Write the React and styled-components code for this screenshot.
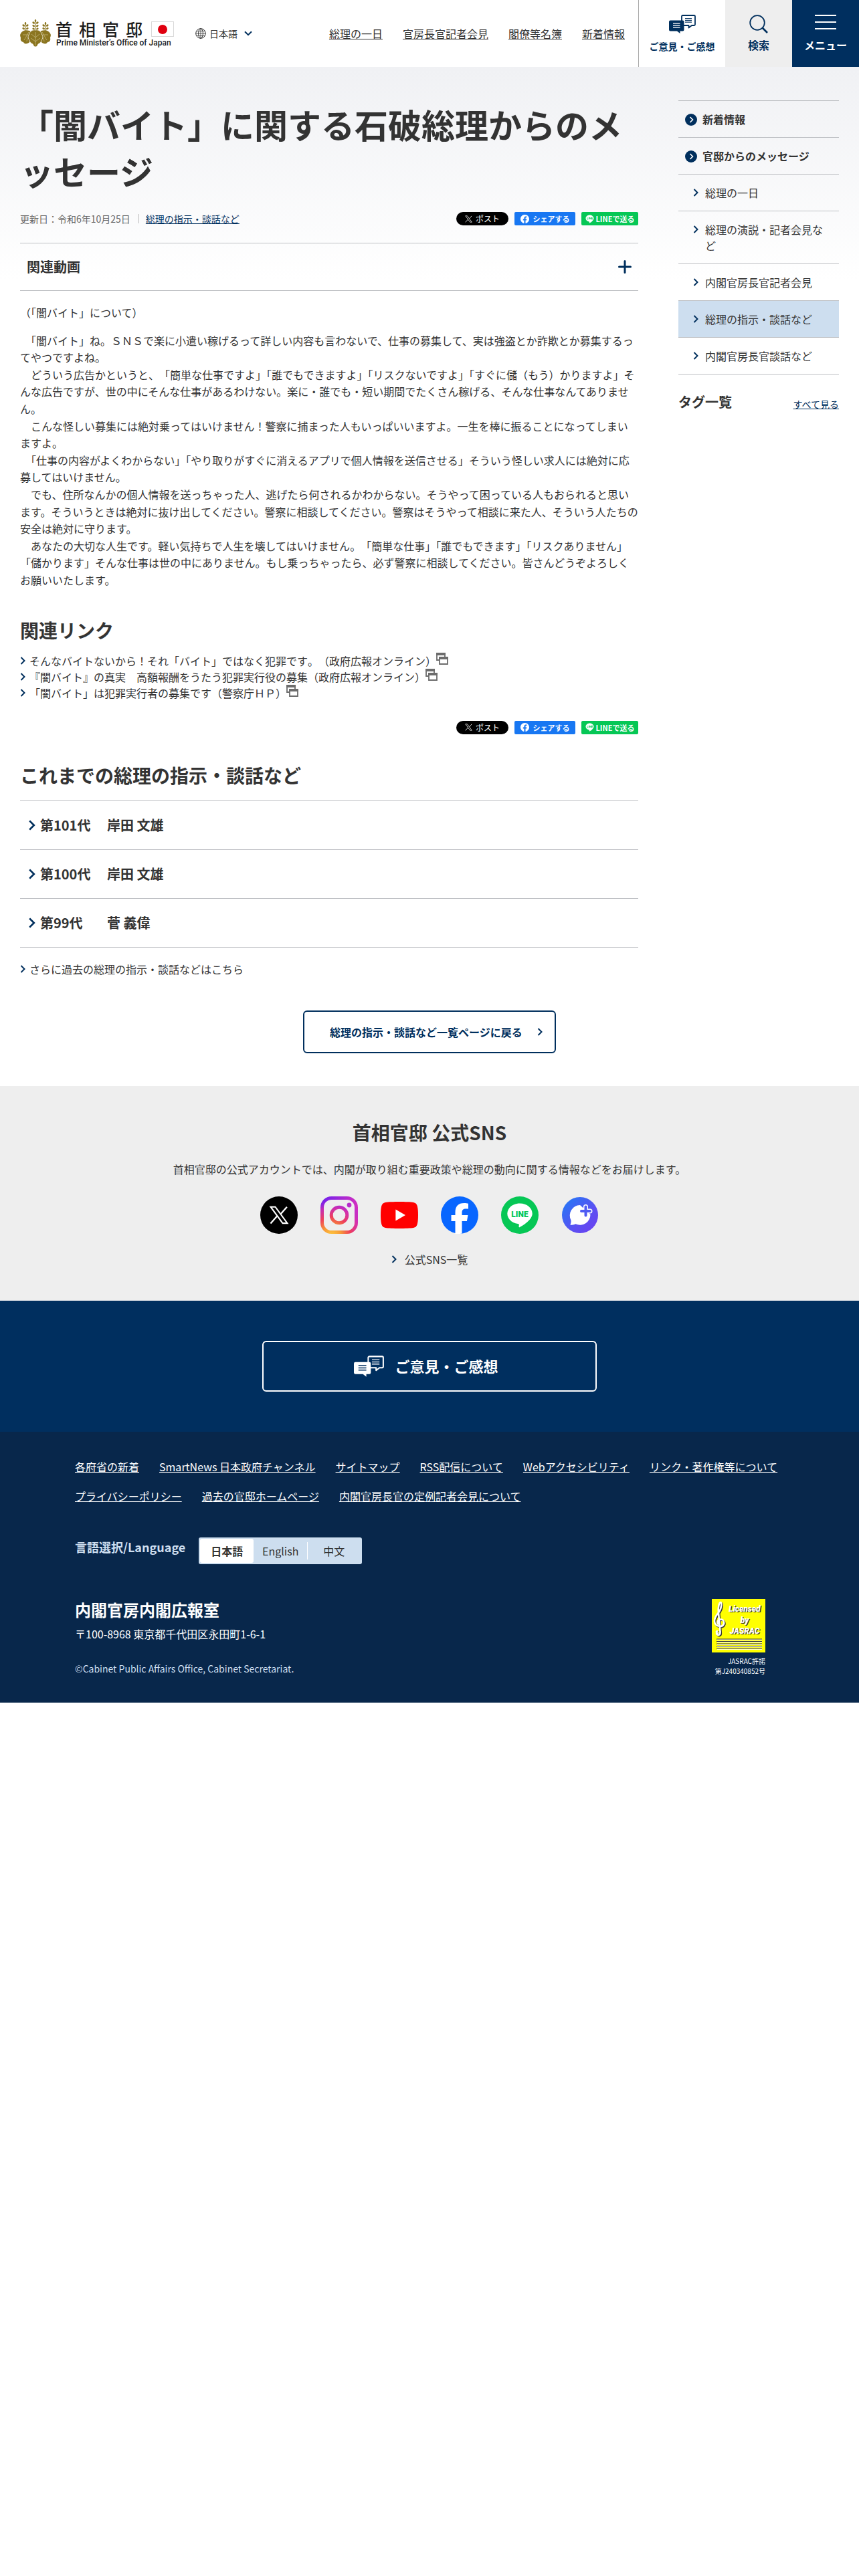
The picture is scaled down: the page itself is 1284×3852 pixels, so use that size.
import React, { useState } from "react";
import styled, { createGlobalStyle, css } from "styled-components";

const navy = "#002f5d";
const ink = "#333333";
const line = "#bcbec2";
const pale = "#cddeef";

const GlobalStyle = createGlobalStyle`
  *, *::before, *::after { box-sizing: border-box; }
  body {
    margin: 0;
    background: #ffffff;
    color: ${ink};
    font-family: "Noto Sans CJK JP", "Noto Sans", sans-serif;
    font-size: 16px;
    line-height: 1.5;
  }
  h1, h2, h3, p, ul { margin: 0; padding: 0; }
  ul { list-style: none; }
  a { color: inherit; }
  button { font: inherit; color: inherit; cursor: pointer; }
  svg { display: block; flex: none; }
`;

/* ---------- icons ---------- */

const Chevron = ({ w = 8, h = 12, color = navy, sw = 2 }) => (
  <svg width={w} height={h} viewBox="0 0 8 12" fill="none" aria-hidden="true">
    <path d="M1.5 1l5 5-5 5" stroke={color} strokeWidth={sw} />
  </svg>
);

const ChevronDown = () => (
  <svg width="12" height="8" viewBox="0 0 12 8" fill="none" aria-hidden="true">
    <path d="M1 1.2l5 5 5-5" stroke={navy} strokeWidth="2" />
  </svg>
);

const CircleArrow = () => (
  <svg width="18" height="18" viewBox="0 0 18 18" fill="none" aria-hidden="true">
    <circle cx="9" cy="9" r="9" fill={navy} />
    <path d="M7.5 5l4 4-4 4" stroke="#fff" strokeWidth="1.6" />
  </svg>
);

const Globe = () => (
  <svg width="16" height="16" viewBox="0 0 16 16" fill="none" stroke={ink} aria-hidden="true">
    <circle cx="8" cy="8" r="7.3" />
    <ellipse cx="8" cy="8" rx="3.4" ry="7.3" />
    <path d="M8 .7v14.6M.7 8h14.6M1.8 4.4h12.4M1.8 11.6h12.4" strokeWidth="0.8" />
  </svg>
);

const TalkIcon = ({ w = 40, h = 28, color = navy, ground = "#fff" }) => (
  <svg width={w} height={h} viewBox="0 0 40 28" fill="none" aria-hidden="true">
    <path
      d="M20.5 1h17A1.5 1.5 0 0 1 39 2.5v12a1.5 1.5 0 0 1-1.500 1.500H34l-4.500 3.500V16H19V2.500A1.500 1.500 0 0 1 20.500 1z"
      stroke={color}
      strokeWidth="1.8"
      strokeLinejoin="round"
    />
    <path d="M24 5.500h10M24 8.300h10M24 11.100h10" stroke={color} strokeWidth="1.200" />
    <path d="M2 8.500h18.500a2 2 0 0 1 2 2v12a2 2 0 0 1-2 2H16.500V28L12 24.500H2a2 2 0 0 1-2-2v-12a2 2 0 0 1 2-2z" fill={color} />
    <path d="M6 13.200h10.500M6 16.200h10.500M6 19.200h10.500" stroke={ground} strokeWidth="1.300" />
  </svg>
);

const SearchIcon = () => (
  <svg width="28" height="28" viewBox="0 0 28 28" fill="none" stroke={navy} aria-hidden="true">
    <circle cx="12" cy="12" r="10.800" strokeWidth="1.800" />
    <path d="M19.500 19.500l7.500 7.500" strokeWidth="2.600" />
  </svg>
);

const MenuIcon = () => (
  <svg width="32" height="22" viewBox="0 0 32 22" stroke="#fff" strokeWidth="2" aria-hidden="true">
    <path d="M0 1h32M0 11h32M0 21h32" />
  </svg>
);

const PlusIcon = () => (
  <svg width="20" height="20" viewBox="0 0 20 20" stroke={navy} strokeWidth="3" strokeLinecap="round" aria-hidden="true">
    <path d="M10 1.500v17M1.500 10h17" />
  </svg>
);

const WindowIcon = () => (
  <svg width="18" height="18" viewBox="0 0 18 18" fill="none" aria-hidden="true">
    <path d="M1 1h12v10H1z" stroke="#6c6c6c" strokeWidth="1.800" />
    <path d="M0 0h14v4H0z" fill="#6c6c6c" />
    <path d="M5 8h12v9H5z" fill="#fff" stroke="#6c6c6c" strokeWidth="1.800" />
    <path d="M4 6h14v4H4z" fill="#6c6c6c" />
  </svg>
);

const fbPath =
  "M24 12.073c0-6.627-5.373-12-12-12s-12 5.373-12 12c0 5.990 4.388 10.954 10.125 11.854v-8.385H7.078v-3.470h3.047V9.430c0-3.007 1.792-4.669 4.533-4.669 1.312 0 2.686.235 2.686.235v2.953H15.830c-1.491 0-1.956.925-1.956 1.874v2.250h3.328l-.532 3.470h-2.796v8.385C19.612 23.027 24 18.062 24 12.073z";

const xStroke = (
  <>
    <path d="M14.500 10.500L22 1.800M9.700 13.400L1.600 22.500" strokeWidth="1.900" />
    <path d="M1.700 1.800h5.800l15 20.400h-5.800z" strokeWidth="1.700" />
  </>
);

const XMini = () => (
  <svg width="11" height="11" viewBox="0 0 24 24" fill="none" stroke="#fff" aria-hidden="true">{xStroke}</svg>
);

const FbMini = () => (
  <svg width="13" height="13" viewBox="0 0 24 24" aria-hidden="true"><path d={fbPath} fill="#fff" /></svg>
);

const LineMini = () => (
  <svg width="13" height="13" viewBox="0 0 26 26" aria-hidden="true">
    <path d="M13 1C6.400 1 1 5.400 1 11c0 5 4.300 9 10 9.800 1.200.3.900 1.500.6 3.700 0 .5.400.8 1 .500C17 23 25 17 25 11 25 5.400 19.600 1 13 1z" fill="#fff" />
    <path d="M5.500 8v6h3M10.500 8v6M13 14V8l3.500 6V8M22 8h-3v6h3M19 11h3" stroke="#06c755" strokeWidth="1.400" fill="none" />
  </svg>
);

const SnsX = () => (
  <svg width="56" height="56" viewBox="0 0 56 56" fill="none" aria-hidden="true">
    <circle cx="28" cy="28" r="28" fill="#000" />
    <g transform="translate(13.500 13.500) scale(1.200)" stroke="#fff">{xStroke}</g>
  </svg>
);

const SnsInstagram = () => (
  <svg width="56" height="56" viewBox="0 0 56 56" fill="none" aria-hidden="true">
    <defs>
      <linearGradient id="igBase" x1="0" y1="0" x2="1" y2="0">
        <stop offset="0" stopColor="#6a1ff0" />
        <stop offset="1" stopColor="#d22fc0" />
      </linearGradient>
      <radialGradient id="igWarm" cx="0.300" cy="1.050" r="1">
        <stop offset="0" stopColor="#fec93f" />
        <stop offset="0.250" stopColor="#f79a37" />
        <stop offset="0.500" stopColor="#ee3f5a" />
        <stop offset="0.750" stopColor="#d930a8" stopOpacity="0.800" />
        <stop offset="1" stopColor="#a02be0" stopOpacity="0" />
      </radialGradient>
      <mask id="igMask">
        <rect x="2.500" y="2.500" width="51" height="51" rx="14" stroke="#fff" strokeWidth="5" />
        <circle cx="28" cy="28" r="11.800" stroke="#fff" strokeWidth="5" />
        <circle cx="43" cy="13" r="3.400" fill="#fff" />
      </mask>
    </defs>
    <g mask="url(#igMask)">
      <rect width="56" height="56" fill="url(#igBase)" />
      <rect width="56" height="56" fill="url(#igWarm)" />
    </g>
  </svg>
);

const SnsYoutube = () => (
  <svg width="56" height="56" viewBox="0 0 56 56" aria-hidden="true">
    <path d="M28 8c8 0 17 .3 21 1 3 .6 5 2.500 5.800 5.500C55.700 18 56 23 56 28s-.3 10-1.200 13.500C54 44.500 52 46.400 49 47c-4 .7-13 1-21 1s-17-.3-21-1c-3-.6-5-2.500-5.800-5.500C.3 38 0 33 0 28s.3-10 1.200-13.500C2 11.500 4 9.600 7 9c4-.7 13-1 21-1z" fill="#f00" />
    <path d="M22.400 19.500v17L37 28z" fill="#fff" />
  </svg>
);

const SnsFacebook = () => (
  <svg width="56" height="56" viewBox="0 0 56 56" aria-hidden="true">
    <circle cx="28" cy="28" r="28" fill="#0866ff" />
    <path d="M21.500 56V37h-6v-9h6v-4c0-9.500 4.500-14 13.500-14 1.800 0 4.800.300 6 .7v8c-.7-.1-1.900-.1-3.300-.1-4.500 0-6.200 1.700-6.200 6.100V28h9l-1.600 9h-7.400v18.600a28 28 0 0 1-10 .1z" fill="#fff" />
  </svg>
);

const SnsLine = () => (
  <svg width="56" height="56" viewBox="0 0 56 56" aria-hidden="true">
    <circle cx="28" cy="28" r="28" fill="#06c755" />
    <path d="M28 10.500c-10.500 0-18.700 6.800-18.700 15.300 0 7.600 6.700 13.900 15.800 15.100 2.100.5 1.900 1.300 1.400 4.100-.1.800.4 1.500 1.600.9C34 43 46.700 34.500 46.700 25.800c0-8.500-8.200-15.300-18.700-15.300z" fill="#fff" />
    <text x="28" y="30.500" textAnchor="middle" fontFamily="Roboto, sans-serif" fontWeight="900" fontSize="12" fill="#06c755">LINE</text>
  </svg>
);

const SnsPlus = () => (
  <svg width="56" height="56" viewBox="0 0 56 56" aria-hidden="true">
    <defs>
      <linearGradient id="plusGround" x1="0" y1="0" x2="1" y2="1">
        <stop offset="0" stopColor="#1d7df6" />
        <stop offset="0.600" stopColor="#5b50f2" />
        <stop offset="1" stopColor="#6f3ff0" />
      </linearGradient>
    </defs>
    <circle cx="28" cy="28" r="27" fill="url(#plusGround)" />
    <path d="M28 13a15.500 15.500 0 0 0-13.600 22.500c.6 2.500-.2 5-1 7 3 .7 6-.2 8-1.200A15.500 15.500 0 0 0 43.500 27z" fill="#fff" />
    <path d="M36.500 15.500v13M30 22h13" stroke="#fff" strokeWidth="7" strokeLinecap="round" />
    <path d="M36.500 15.500v13M30 22h13" stroke="#4f5bf3" strokeWidth="4" strokeLinecap="round" />
  </svg>
);

const gold = "#8b7520";
const Stalk = ({ x, y, n }) => (
  <g>
    <path d={`M${x} ${y}v${n * 5 + 3}`} stroke={gold} strokeWidth="1" />
    <ellipse cx={x} cy={y} rx="1.300" ry="2" fill={gold} />
    {Array.from({ length: n }, (_, i) => (
      <g key={i} fill={gold}>
        <ellipse cx={x - 2.8} cy={y + 3 + i * 4.6} rx="2" ry="1.400" transform={`rotate(35 ${x - 2.8} ${y + 3 + i * 4.6})`} />
        <ellipse cx={x + 2.8} cy={y + 3 + i * 4.6} rx="2" ry="1.400" transform={`rotate(-35 ${x + 2.8} ${y + 3 + i * 4.6})`} />
      </g>
    ))}
  </g>
);

const SiteLogo = () => (
  <svg width="232" height="60" viewBox="0 -8 232 60" fill="none" role="img" aria-label="首相官邸 Prime Minister's Office of Japan">
    <Stalk x={23} y={3} n={3} />
    <Stalk x={8} y={7} n={2} />
    <Stalk x={38} y={7} n={2} />
    <path d="M14 18C8 16 3 18 1 22c-2 3 0 5 0 7-1 3 1 6 4 6 1 3 5 3 8 1l5-5V20z" fill={gold} />
    <path d="M32 18c6-2 11 0 13 4 2 3 0 5 0 7 1 3-1 6-4 6-1 3-5 3-8 1l-5-5V20z" fill={gold} />
    <path d="M23 17c-4-1-9 2-9 6-3 3-2 7 0 9 0 3 3 5 5 6 1 2 2 4 4 4s3-2 4-4c2-1 5-3 5-6 2-2 3-6 0-9 0-4-5-7-9-6z" fill={gold} stroke="#fff" strokeWidth="0.700" />
    <path d="M23 20v20M23 28l-6-5M23 28l6-5M23 34l-7-5M23 34l7-5M13 20l-7 12M13 24l-9 0M11 28l-1 6M33 20l7 12M33 24h9M35 28l1 6" stroke="#d9cf9c" strokeWidth="0.600" />
    <g fill="#1c1c1c" fontFamily="'Noto Sans CJK JP', sans-serif" fontWeight="500" fontSize="25">
      <text x="53" y="26">首</text>
      <text x="88" y="26">相</text>
      <text x="123" y="26">官</text>
      <text x="158" y="26">邸</text>
    </g>
    <text x="54" y="40" fill="#1c1c1c" fontFamily="Roboto, sans-serif" fontWeight="500" fontSize="12">Prime Minister’s Office of Japan</text>
    <rect x="196.500" y="4.500" width="33" height="22" fill="#fff" stroke="#d8d8d8" />
    <circle cx="213" cy="16" r="7" fill="#e0000f" />
  </svg>
);

const JasracMark = () => (
  <svg width="80" height="80" viewBox="0 0 80 80" fill="none" role="img" aria-label="Licensed by JASRAC">
    <rect width="80" height="80" fill="#ffff00" />
    {[["#333", 1.3], ["#fff", 0]].map(([c, o]) => (
      <g key={c} transform={`translate(${o} ${o})`}>
        <path
          d="M9 51c-2 0-3-2-1-3M7 52c3 4 6 1 5.500-3L10 21c-1-8 1-16 3-16s2 8-2 14c-3 4-7 8-7 14 0 5 4 8 8 8 5 0 7-4 6-7-1-4-7-5-9-1-1 2 0 4 2 5"
          stroke={c}
          strokeWidth="2.600"
          strokeLinecap="round"
        />
        <g fill={c} fontFamily="Roboto, sans-serif" fontWeight="900" fontStyle="italic" fontSize="12" textAnchor="middle">
          <text x="49" y="19">Licensed</text>
          <text x="49" y="36">by</text>
          <text x="49" y="52">JASRAC</text>
        </g>
      </g>
    ))}
    <path d="M8 61h67M8 64.500h67M8 68h67M8 71.500h67M8 75h67" stroke="#fff" strokeWidth="1.300" />
    <path d="M7 60h68M7 63.500h68M7 67h68M7 70.500h68M7 74h68" stroke="#333" strokeWidth="1.200" />
  </svg>
);

/* ---------- header ---------- */

const Header = styled.header`
  display: flex;
  align-items: stretch;
  height: 100px;
  background: #fff;
  box-shadow: 0 0 8px rgba(0, 0, 0, 0.4);
`;

const Brand = styled.div`
  display: flex;
  align-items: center;
  gap: 30px;
  padding-left: 30px;
`;

const LangButton = styled.button`
  display: flex;
  align-items: center;
  gap: 5px;
  padding: 0;
  border: 0;
  background: none;
  font-size: 14px;
  svg:last-child { margin-left: 5px; }
`;

const GlobalNav = styled.nav`
  display: flex;
  flex: 1;
  align-items: center;
  justify-content: flex-end;
  gap: 30px;
  padding-right: 20px;
  white-space: nowrap;
`;

const Tile = styled.button`
  display: flex;
  flex-direction: column;
  align-items: center;
  gap: ${(p) => p.$gap}px;
  width: ${(p) => p.$width}px;
  padding: 22px 0 0;
  border: 0;
  background: ${(p) => p.$bg};
  color: ${(p) => p.$color};
  font-size: ${(p) => p.$size}px;
  font-weight: 700;
  line-height: 24px;
  white-space: nowrap;
  ${(p) => p.$ruled && css`border-left: 1px solid #a9a9a9;`}
`;

/* ---------- article ---------- */

const Page = styled.main`
  display: flex;
  flex-direction: column;
  align-items: center;
  padding: 50px 30px 49px;
  background: linear-gradient(#f0f1f4, #ffffff 320px);
`;

const Columns = styled.div`
  display: flex;
  gap: 60px;
  width: 100%;
`;

const Article = styled.article`
  flex: 1;
  min-width: 0;
`;

const Title = styled.h1`
  font-size: 50px;
  font-weight: 700;
  line-height: 70px;
`;

const MetaRow = styled.div`
  display: flex;
  align-items: center;
  justify-content: space-between;
  margin: 27px 0 26px;
`;

const Meta = styled.p`
  display: flex;
  align-items: center;
  color: #666;
  font-size: 14px;
  line-height: 20px;
  a { color: ${navy}; }
`;

const MetaRule = styled.span`
  width: 1px;
  height: 14px;
  margin: 0 10px 0 12px;
  background: #bbb;
`;

const ShareList = styled.div`
  display: flex;
  justify-content: flex-end;
  gap: 9px;
  margin-top: ${(p) => p.$top || 0}px;
`;

const ShareLink = styled.a`
  display: flex;
  align-items: center;
  justify-content: center;
  gap: ${(p) => p.$gap}px;
  width: ${(p) => p.$width}px;
  height: 20px;
  border-radius: ${(p) => p.$radius}px;
  background: ${(p) => p.$bg};
  color: #fff;
  font-size: ${(p) => p.$size}px;
  font-weight: ${(p) => p.$weight};
  line-height: 20px;
  text-decoration: none;
  white-space: nowrap;
`;

const Accordion = styled.button`
  display: flex;
  align-items: center;
  justify-content: space-between;
  width: 100%;
  height: 72px;
  padding: 0 10px;
  border: solid ${line};
  border-width: 1px 0;
  background: none;
  font-size: 20px;
  font-weight: 700;
`;

const Speech = styled.div`
  display: flex;
  flex-direction: column;
  gap: 16px;
  margin-top: 20px;
  line-height: 1.6;
`;

const FullWidth = styled.span`
  text-spacing-trim: space-all;
`;

const Heading = styled.h2`
  margin-top: 40px;
  font-size: 28px;
  font-weight: 700;
  line-height: 42px;
`;

const LinkList = styled.ul`
  margin-top: 13px;
`;

const ArrowLink = styled.a`
  display: flex;
  align-items: center;
  gap: 6px;
  line-height: 24px;
  text-decoration: none;
  margin-top: ${(p) => p.$top || 0}px;
`;

const LinkText = styled.span`
  display: flex;
  align-items: flex-start;
`;

const TermList = styled.ul`
  margin-top: 17px;
  border-top: 1px solid ${line};
`;

const TermLink = styled.a`
  display: flex;
  align-items: center;
  gap: 7px;
  height: 73px;
  padding-left: 12px;
  border-bottom: 1px solid ${line};
  font-size: 20px;
  font-weight: 700;
  text-decoration: none;
`;

const TermNumber = styled.span`
  width: 93px;
`;

const BackLink = styled.a`
  display: flex;
  align-items: center;
  justify-content: space-between;
  width: 378px;
  height: 64px;
  margin-top: 50px;
  padding: 0 18px 0 38px;
  border: 2px solid ${navy};
  border-radius: 6px;
  color: ${navy};
  font-weight: 700;
  text-decoration: none;
`;

/* ---------- sidebar ---------- */

const Side = styled.aside`
  width: 240px;
`;

const SideList = styled.ul`
  border-top: 1px solid ${line};
`;

const SideLink = styled.a`
  display: flex;
  align-items: flex-start;
  gap: ${(p) => (p.$top ? 8 : 10)}px;
  padding: 15px 10px 15px ${(p) => (p.$top ? 10 : 22)}px;
  border-bottom: 1px solid ${line};
  background: ${(p) => (p.$current ? pale : "transparent")};
  font-weight: ${(p) => (p.$top ? 700 : 400)};
  line-height: 24px;
  text-decoration: none;
  svg { margin-top: ${(p) => (p.$top ? 4 : 6)}px; }
`;

const TagHead = styled.div`
  display: flex;
  align-items: flex-end;
  justify-content: space-between;
  margin-top: 26px;
  a {
    color: ${navy};
    font-size: 14px;
    line-height: 24px;
  }
`;

const TagTitle = styled.h2`
  font-size: 20px;
  font-weight: 700;
  line-height: 30px;
`;

/* ---------- official accounts ---------- */

const Sns = styled.section`
  display: flex;
  flex-direction: column;
  align-items: center;
  padding: 48px 30px 50px;
  background: #eeeeee;
`;

const SnsTitle = styled.h2`
  font-size: 28px;
  font-weight: 700;
  line-height: 42px;
`;

const SnsLead = styled.p`
  margin-top: 22px;
  line-height: 24px;
`;

const SnsIcons = styled.div`
  display: flex;
  gap: 34px;
  margin: 29px 0 26px;
`;

const SnsAll = styled.a`
  display: flex;
  align-items: center;
  gap: 12px;
  line-height: 24px;
  text-decoration: none;
`;

/* ---------- opinion band and footer ---------- */

const Opinion = styled.section`
  display: flex;
  justify-content: center;
  padding: 60px 30px;
  background: #002f5f;
`;

const OpinionLink = styled.a`
  display: flex;
  align-items: center;
  justify-content: center;
  gap: 16px;
  width: 500px;
  height: 76px;
  padding-right: 10px;
  border: 2px solid #fff;
  border-radius: 6px;
  color: #fff;
  font-size: 22px;
  font-weight: 700;
  text-decoration: none;
`;

const Footer = styled.footer`
  padding: 40px 30px 39px;
  background: #08274b;
  color: #fff;
`;

const FooterInner = styled.div`
  max-width: 1060px;
  margin: 0 auto;
`;

const FooterNav = styled.nav`
  display: flex;
  flex-wrap: wrap;
  gap: 20px 30px;
  line-height: 24px;
`;

const LangRow = styled.div`
  display: flex;
  align-items: flex-start;
  gap: 20px;
  margin: 50px 0;
`;

const LangLabel = styled.p`
  color: ${pale};
  font-size: 18px;
  font-weight: 700;
  line-height: 28px;
`;

const Switch = styled.div`
  display: flex;
  align-items: center;
  padding: 2px;
  border-radius: 3px;
  background: ${pale};
`;

const SwitchItem = styled.button`
  width: 80px;
  height: 36px;
  padding: 0;
  border: 0;
  border-radius: 3px;
  background: ${(p) => (p.$on ? "#fff" : "transparent")};
  font-weight: ${(p) => (p.$on ? 700 : 400)};
  line-height: 36px;
  color: ${ink};
`;

const SwitchRule = styled.span`
  width: 1px;
  height: 26px;
  margin-right: -1px;
  background: #fff;
`;

const FooterBottom = styled.div`
  display: flex;
  justify-content: space-between;
  padding-right: 28px;
`;

const Office = styled.h2`
  font-size: 24px;
  font-weight: 700;
  line-height: 36px;
`;

const Address = styled.p`
  margin-top: 6px;
  line-height: 24px;
`;

const Copyright = styled.p`
  margin-top: 28px;
  color: ${pale};
  font-size: 14px;
  line-height: 24px;
`;

const License = styled.div`
  display: flex;
  flex-direction: column;
  align-items: flex-end;
  gap: 5px;
  padding-top: 2px;
  font-size: 10px;
  line-height: 15px;
  text-align: right;
`;

/* ---------- data ---------- */

const navItems = ["総理の一日", "官房長官記者会見", "閣僚等名簿", "新着情報"];

const speech = [
  "　「闇バイト」ね。ＳＮＳで楽に小遣い稼げるって詳しい内容も言わないで、仕事の募集して、実は強盗とか詐欺とか募集するってやつですよね。",
  "　どういう広告かというと、「簡単な仕事ですよ」「誰でもできますよ」「リスクないですよ」「すぐに儲（もう）かりますよ」そんな広告ですが、世の中にそんな仕事があるわけない。楽に・誰でも・短い期間でたくさん稼げる、そんな仕事なんてありません。",
  "　こんな怪しい募集には絶対乗ってはいけません！警察に捕まった人もいっぱいいますよ。一生を棒に振ることになってしまいますよ。",
  "　「仕事の内容がよくわからない」「やり取りがすぐに消えるアプリで個人情報を送信させる」そういう怪しい求人には絶対に応募してはいけません。",
  "　でも、住所なんかの個人情報を送っちゃった人、逃げたら何されるかわからない。そうやって困っている人もおられると思います。そういうときは絶対に抜け出してください。警察に相談してください。警察はそうやって相談に来た人、そういう人たちの安全は絶対に守ります。",
  "　あなたの大切な人生です。軽い気持ちで人生を壊してはいけません。「簡単な仕事」「誰でもできます」「リスクありません」「儲かります」そんな仕事は世の中にありません。もし乗っちゃったら、必ず警察に相談してください。皆さんどうぞよろしくお願いいたします。",
];

const relatedLinks = [
  "そんなバイトないから！それ「バイト」ではなく犯罪です。（政府広報オンライン）",
  "『闇バイト』の真実　高額報酬をうたう犯罪実行役の募集（政府広報オンライン）",
  "「闇バイト」は犯罪実行者の募集です（警察庁ＨＰ）",
];

const terms = [
  ["第101代", "岸田 文雄"],
  ["第100代", "岸田 文雄"],
  ["第99代", "菅 義偉"],
];

const sideItems = [
  { label: "新着情報", top: true },
  { label: "官邸からのメッセージ", top: true },
  { label: "総理の一日" },
  { label: "総理の演説・記者会見など" },
  { label: "内閣官房長官記者会見" },
  { label: "総理の指示・談話など", current: true },
  { label: "内閣官房長官談話など" },
];

const accounts = [
  ["X", SnsX],
  ["Instagram", SnsInstagram],
  ["YouTube", SnsYoutube],
  ["Facebook", SnsFacebook],
  ["LINE", SnsLine],
  ["コミュニティ", SnsPlus],
];

const footerLinks = [
  "各府省の新着",
  "SmartNews 日本政府チャンネル",
  "サイトマップ",
  "RSS配信について",
  "Webアクセシビリティ",
  "リンク・著作権等について",
  "プライバシーポリシー",
  "過去の官邸ホームページ",
  "内閣官房長官の定例記者会見について",
];

/* Keeps the full space between a comma or full stop and an opening bracket. */
const Prose = ({ text }) =>
  text.split(/([、。][「（])/).map((part, i) => (i % 2 ? <FullWidth key={i}>{part}</FullWidth> : part));

const Share = ({ top }) => (
  <ShareList $top={top}>
    <ShareLink href="#" $width={78} $radius={10} $bg="#000" $size={12} $weight={400} $gap={5}>
      <XMini />ポスト
    </ShareLink>
    <ShareLink href="#" $width={91} $radius={2} $bg="#1877f2" $size={11} $weight={700} $gap={6}>
      <FbMini />シェアする
    </ShareLink>
    <ShareLink href="#" $width={85} $radius={2} $bg="#06c755" $size={11} $weight={700} $gap={3}>
      <LineMini />LINEで送る
    </ShareLink>
  </ShareList>
);

export default function App() {
  const [lang, setLang] = useState("日本語");
  return (
    <div lang="ja">
      <GlobalStyle />
      <Header>
        <Brand>
          <a href="#"><SiteLogo /></a>
          <LangButton type="button"><Globe />日本語 <ChevronDown /></LangButton>
        </Brand>
        <GlobalNav>
          {navItems.map((t) => <a key={t} href="#">{t}</a>)}
        </GlobalNav>
        <Tile type="button" $width={130} $gap={7} $bg="#fff" $color={navy} $size={14} $ruled>
          <TalkIcon />ご意見・ご感想
        </Tile>
        <Tile type="button" $width={100} $gap={5} $bg="#eeeeee" $color={navy} $size={16}>
          <SearchIcon />検索
        </Tile>
        <Tile type="button" $width={100} $gap={11} $bg="#002f5f" $color="#fff" $size={16}>
          <MenuIcon />メニュー
        </Tile>
      </Header>

      <Page>
        <Columns>
          <Article>
            <Title>「闇バイト」に関する石破総理からのメッセージ</Title>
            <MetaRow>
              <Meta>
                更新日：令和6年10月25日
                <MetaRule />
                <a href="#">総理の指示・談話など</a>
              </Meta>
              <Share />
            </MetaRow>
            <Accordion type="button" aria-expanded="false">関連動画<PlusIcon /></Accordion>
            <Speech>
              <p>（「闇バイト」について）</p>
              <div>{speech.map((t) => <p key={t}><Prose text={t} /></p>)}</div>
            </Speech>
            <Heading>関連リンク</Heading>
            <LinkList>
              {relatedLinks.map((t) => (
                <li key={t}>
                  <ArrowLink href="#">
                    <Chevron />
                    <LinkText><span><Prose text={t} /></span><WindowIcon /></LinkText>
                  </ArrowLink>
                </li>
              ))}
            </LinkList>
            <Share top={30} />
            <Heading>これまでの総理の指示・談話など</Heading>
            <TermList>
              {terms.map(([n, name]) => (
                <li key={n}>
                  <TermLink href="#"><Chevron w={11} h={16} /><TermNumber>{n}</TermNumber>{name}</TermLink>
                </li>
              ))}
            </TermList>
            <ArrowLink href="#" $top={20}><Chevron />さらに過去の総理の指示・談話などはこちら</ArrowLink>
          </Article>
          <Side>
            <SideList>
              {sideItems.map((s) => (
                <li key={s.label}>
                  <SideLink href="#" $top={s.top} $current={s.current}>
                    {s.top ? <CircleArrow /> : <Chevron />}
                    <span>{s.label}</span>
                  </SideLink>
                </li>
              ))}
            </SideList>
            <TagHead>
              <TagTitle>タグ一覧</TagTitle>
              <a href="#">すべて見る</a>
            </TagHead>
          </Side>
        </Columns>
        <BackLink href="#">総理の指示・談話など一覧ページに戻る<Chevron /></BackLink>
      </Page>

      <Sns>
        <SnsTitle>首相官邸 公式SNS</SnsTitle>
        <SnsLead>首相官邸の公式アカウントでは、内閣が取り組む重要政策や総理の動向に関する情報などをお届けします。</SnsLead>
        <SnsIcons>
          {accounts.map(([name, Icon]) => <a key={name} href="#" aria-label={name}><Icon /></a>)}
        </SnsIcons>
        <SnsAll href="#"><Chevron />公式SNS一覧</SnsAll>
      </Sns>

      <Opinion>
        <OpinionLink href="#"><TalkIcon w={45} h={32} color="#fff" ground="#002f5f" />ご意見・ご感想</OpinionLink>
      </Opinion>

      <Footer>
        <FooterInner>
          <FooterNav>
            {footerLinks.map((t) => <a key={t} href="#">{t}</a>)}
          </FooterNav>
          <LangRow>
            <LangLabel>言語選択/Language</LangLabel>
            <Switch>
              {["日本語", "English", "中文"].map((t, i) => (
                <React.Fragment key={t}>
                  {i === 2 && <SwitchRule />}
                  <SwitchItem type="button" $on={lang === t} onClick={() => setLang(t)}>{t}</SwitchItem>
                </React.Fragment>
              ))}
            </Switch>
          </LangRow>
          <FooterBottom>
            <div>
              <Office>内閣官房内閣広報室</Office>
              <Address>〒100-8968 東京都千代田区永田町1-6-1</Address>
              <Copyright>©Cabinet Public Affairs Office, Cabinet Secretariat.</Copyright>
            </div>
            <License>
              <JasracMark />
              <p>JASRAC許諾<br />第J240340852号</p>
            </License>
          </FooterBottom>
        </FooterInner>
      </Footer>
    </div>
  );
}
